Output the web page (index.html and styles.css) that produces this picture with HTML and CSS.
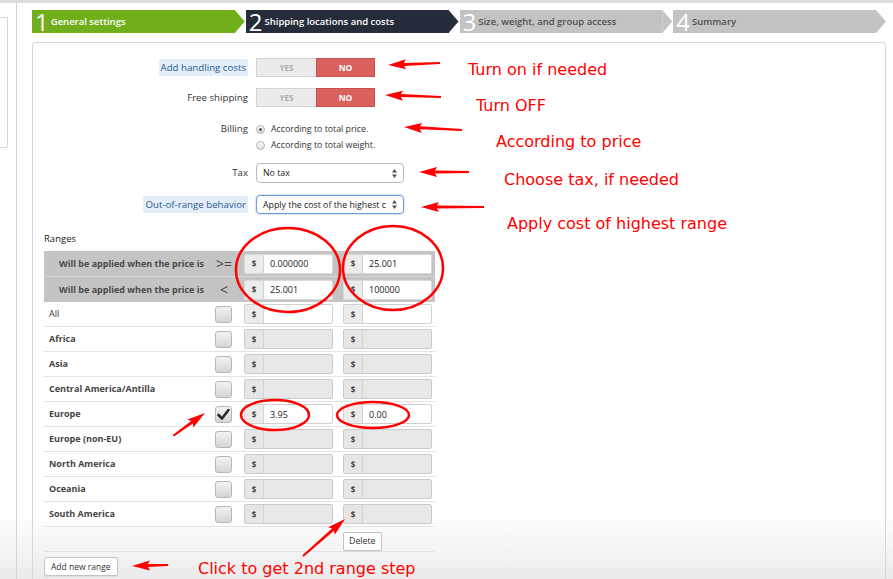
FILE: index.html
```html
<!DOCTYPE html>
<html lang="en">
<head>
  <meta charset="UTF-8" />
  <title>Shipping locations and costs</title>
  <link rel="stylesheet" href="styles.css">
</head>
<body>
  <div class="topline"></div>

  <div class="page">
    <!-- left edge of the admin sidebar -->
    <div class="side">
      <div class="side-box"></div>
      <div class="side-rail"></div>
    </div>

    <div class="main">
      <!-- WIZARD STEPS -->
      <div class="steps">
        <div class="step done">
          <div class="step-body"><span class="step-num">1</span><span class="step-text">General settings</span></div>
          <div class="step-arrow"></div>
        </div>
        <div class="step current">
          <div class="step-body"><span class="step-num">2</span><span class="step-text">Shipping locations and costs</span></div>
          <div class="step-arrow"></div>
        </div>
        <div class="step">
          <div class="step-body"><span class="step-num">3</span><span class="step-text">Size, weight, and group access</span></div>
          <div class="step-arrow"></div>
        </div>
        <div class="step">
          <div class="step-body"><span class="step-num">4</span><span class="step-text">Summary</span></div>
          <div class="step-arrow"></div>
        </div>
      </div>

      <div class="panel">
        <div class="field first">
          <label class="field-label"><span class="hint">Add handling costs</span></label>
          <div class="toggle"><span class="toggle-yes">YES</span><span class="toggle-no">NO</span></div>
        </div>

        <div class="field second">
          <label class="field-label">Free shipping</label>
          <div class="toggle"><span class="toggle-yes">YES</span><span class="toggle-no">NO</span></div>
        </div>

        <div class="field billing">
          <label class="field-label">Billing</label>
          <div class="options">
            <div class="option"><span class="radio checked"></span>According to total price.</div>
            <div class="option"><span class="radio"></span>According to total weight.</div>
          </div>
        </div>

        <div class="field tax">
          <label class="field-label">Tax</label>
          <div class="select">
            <span class="select-text">No tax</span>
            <svg class="caret" width="5" height="9" viewBox="0 0 5 9"><path d="M2.5 0 L5 3.4 L0 3.4 Z M0 5.6 L5 5.6 L2.5 9 Z"/></svg>
          </div>
        </div>

        <div class="field range-mode">
          <label class="field-label"><span class="hint">Out-of-range behavior</span></label>
          <div class="select focus">
            <span class="select-text">Apply the cost of the highest c</span>
            <svg class="caret" width="5" height="9" viewBox="0 0 5 9"><path d="M2.5 0 L5 3.4 L0 3.4 Z M0 5.6 L5 5.6 L2.5 9 Z"/></svg>
          </div>
        </div>

        <div class="ranges-title">Ranges</div>

        <div class="ranges">
          <div class="range-head">
            <div class="head-text">Will be applied when the price is</div>
            <div class="head-op">&gt;=</div>
            <div class="money"><span class="money-cur">$</span><input type="text" value="0.000000"></div>
            <div class="money"><span class="money-cur">$</span><input type="text" value="25.001"></div>
          </div>
          <div class="range-head second">
            <div class="head-text">Will be applied when the price is</div>
            <div class="head-op">&lt;</div>
            <div class="money"><span class="money-cur">$</span><input type="text" value="25.001"></div>
            <div class="money"><span class="money-cur">$</span><input type="text" value="100000"></div>
          </div>

          <div class="range-row">
            <div class="zone plain">All</div>
            <span class="check"></span>
            <div class="money"><span class="money-cur">$</span><input type="text" value=""></div>
            <div class="money"><span class="money-cur">$</span><input type="text" value=""></div>
          </div>
          <div class="range-row">
            <div class="zone">Africa</div>
            <span class="check"></span>
            <div class="money off"><span class="money-cur">$</span><input type="text" disabled></div>
            <div class="money off"><span class="money-cur">$</span><input type="text" disabled></div>
          </div>
          <div class="range-row">
            <div class="zone">Asia</div>
            <span class="check"></span>
            <div class="money off"><span class="money-cur">$</span><input type="text" disabled></div>
            <div class="money off"><span class="money-cur">$</span><input type="text" disabled></div>
          </div>
          <div class="range-row">
            <div class="zone">Central America/Antilla</div>
            <span class="check"></span>
            <div class="money off"><span class="money-cur">$</span><input type="text" disabled></div>
            <div class="money off"><span class="money-cur">$</span><input type="text" disabled></div>
          </div>
          <div class="range-row">
            <div class="zone">Europe</div>
            <span class="check on"><svg width="15" height="15" viewBox="0 0 15 15"><path d="M2.5 8 L6 11.5 L12.5 3"/></svg></span>
            <div class="money"><span class="money-cur">$</span><input type="text" value="3.95"></div>
            <div class="money"><span class="money-cur">$</span><input type="text" value="0.00"></div>
          </div>
          <div class="range-row">
            <div class="zone">Europe (non-EU)</div>
            <span class="check"></span>
            <div class="money off"><span class="money-cur">$</span><input type="text" disabled></div>
            <div class="money off"><span class="money-cur">$</span><input type="text" disabled></div>
          </div>
          <div class="range-row">
            <div class="zone">North America</div>
            <span class="check"></span>
            <div class="money off"><span class="money-cur">$</span><input type="text" disabled></div>
            <div class="money off"><span class="money-cur">$</span><input type="text" disabled></div>
          </div>
          <div class="range-row">
            <div class="zone">Oceania</div>
            <span class="check"></span>
            <div class="money off"><span class="money-cur">$</span><input type="text" disabled></div>
            <div class="money off"><span class="money-cur">$</span><input type="text" disabled></div>
          </div>
          <div class="range-row">
            <div class="zone">South America</div>
            <span class="check"></span>
            <div class="money off"><span class="money-cur">$</span><input type="text" disabled></div>
            <div class="money off"><span class="money-cur">$</span><input type="text" disabled></div>
          </div>

          <div class="range-row foot">
            <div></div>
            <div></div>
            <div></div>
            <div><button class="btn">Delete</button></div>
          </div>
        </div>

        <button class="btn add-range">Add new range</button>
      </div>
    </div>
  </div>

  <!-- red annotations drawn over the screenshot -->
  <svg class="notes" width="893" height="579" viewBox="0 0 893 579">
    <g class="note-rings">
      <ellipse cx="288" cy="270" rx="52" ry="42"/>
      <ellipse cx="393" cy="268" rx="50" ry="42"/>
      <ellipse cx="275" cy="415" rx="34" ry="15"/>
      <ellipse cx="373" cy="415" rx="36" ry="13"/>
    </g>
    <g class="note-arrows">
      <path transform="translate(388 65) rotate(-2.2)" d="M0 0 L18 -5 L16 -1.5 L52 -1 L52 1 L16 1.5 L18 5 Z"/>
      <path transform="translate(385 95) rotate(2)" d="M0 0 L18 -5 L16 -1.5 L56 -1 L56 1 L16 1.5 L18 5 Z"/>
      <path transform="translate(404 127) rotate(3)" d="M0 0 L18 -5 L16 -1.5 L58 -1 L58 1 L16 1.5 L18 5 Z"/>
      <path transform="translate(419 172)" d="M0 0 L18 -5 L16 -1.5 L50 -1 L50 1 L16 1.5 L18 5 Z"/>
      <path transform="translate(421 207)" d="M0 0 L18 -5 L16 -1.5 L63 -1 L63 1 L16 1.5 L18 5 Z"/>
      <path transform="translate(132 566) rotate(-1.6)" d="M0 0 L18 -5 L16 -1.5 L36 -1 L36 1 L16 1.5 L18 5 Z"/>
      <path transform="translate(345 519) rotate(138.6)" d="M0 0 L18 -5 L16 -1.5 L56 -1 L56 1 L16 1.5 L18 5 Z"/>
      <path transform="translate(205 413) rotate(144.3)" d="M0 0 L18 -5 L16 -1.5 L39 -1 L39 1 L16 1.5 L18 5 Z"/>
    </g>
    <g class="note-text">
      <text x="468" y="75">Turn on if needed</text>
      <text x="476" y="111">Turn OFF</text>
      <text x="496" y="147">According to price</text>
      <text x="504" y="185">Choose tax, if needed</text>
      <text x="507" y="229">Apply cost of highest range</text>
      <text x="198" y="574">Click to get 2nd range step</text>
    </g>
  </svg>
</body>
</html>
```

FILE: styles.css
```css
html, body {
  height: 579px;
  overflow: hidden;
}

body {
  margin: 0;
  position: relative;
  font-family: "Open Sans", "Liberation Sans", sans-serif;
  color: #333;
  background: linear-gradient(to bottom, #fff 0, #fff 515px, #ebebeb 579px);
}

.topline {
  height: 3px;
  background: #dcdcdc;
}

.page {
  display: flex;
  height: 576px;
}

/* SIDEBAR EDGE */
.side {
  width: 32px;
  flex: none;
  display: flex;
}

.side-box {
  width: 8px;
  height: 131px;
  margin-top: 14px;
  box-sizing: border-box;
  border: 1px solid #d6d6d6;
  border-left: none;
  border-radius: 0 0 3px 0;
}

.side-rail {
  width: 1px;
  margin-left: 8px;
  background: #d4d4d4;
}

.main {
  width: 854px;
  flex: none;
}

/* WIZARD STEPS */
.steps {
  display: flex;
  gap: 1px;
  height: 23px;
  margin-top: 7px;
}

.step {
  flex: 1;
  display: flex;
}

.step-body {
  flex: 1;
  display: flex;
  align-items: center;
  padding-left: 3px;
  white-space: nowrap;
  background: #c3c3c3;
  color: #505050;
}

.step-arrow {
  width: 10px;
  background: #c3c3c3;
  clip-path: polygon(0 0, 100% 50%, 0 100%);
}

.step.done .step-body,
.step.done .step-arrow {
  background: #70af1b;
}

.step.current .step-body,
.step.current .step-arrow {
  background: #272c3a;
}

.step.done .step-body,
.step.current .step-body {
  color: #fff;
}

.step-num {
  font-size: 24px;
  font-weight: 400;
  line-height: 20px;
  color: #fff;
  margin-right: 2px;
}

.step-text {
  font-size: 9.5px;
  font-weight: 600;
}

/* PANEL */
.panel {
  margin-top: 9px;
  height: 600px;
  box-sizing: border-box;
  padding-left: 11px;
  border: 1px solid #d8d8d8;
  border-bottom: none;
  border-radius: 4px 4px 0 0;
}

.field {
  display: flex;
  align-items: center;
}

.field.first { margin-top: 15px; }
.field.second { margin-top: 11px; }
.field.billing { margin-top: 14px; align-items: flex-start; }
.field.tax { margin-top: 10px; }
.field.range-mode { margin-top: 12px; }

.field-label {
  width: 204px;
  flex: none;
  margin-right: 8px;
  text-align: right;
  font-size: 9.7px;
  line-height: 16px;
  color: #333;
}

.hint {
  background: #e3eef9;
  color: #2d5a8e;
  padding: 2px 2px;
  border-radius: 2px;
}

.toggle {
  display: flex;
  width: 119px;
  height: 19px;
  font-weight: 700;
}

.toggle span {
  display: flex;
  align-items: center;
  justify-content: center;
  box-sizing: border-box;
}

.toggle-yes {
  width: 60px;
  background: #ebebeb;
  border: 1px solid #d4d4d4;
  border-right: none;
  color: #adadad;
  font-size: 8px;
}

.toggle-no {
  flex: 1;
  background: #d9625f;
  border: 1px solid #c45150;
  color: #fff;
  font-size: 8.5px;
}

.option {
  display: flex;
  align-items: center;
  height: 16px;
  font-size: 8.8px;
  color: #333;
}

.radio {
  width: 9px;
  height: 9px;
  box-sizing: border-box;
  margin-right: 6px;
  border: 1px solid #b0b0b0;
  border-radius: 50%;
  background: linear-gradient(#fdfdfd, #dedede);
  display: flex;
  align-items: center;
  justify-content: center;
}

.radio.checked::after {
  content: "";
  width: 3px;
  height: 3px;
  border-radius: 50%;
  background: #555;
}

.select {
  width: 148px;
  height: 20px;
  box-sizing: border-box;
  display: flex;
  align-items: center;
  justify-content: space-between;
  padding: 0 6px;
  border: 1px solid #b9b9b9;
  border-radius: 4px;
  background: #fff;
  font-size: 8.8px;
  color: #222;
}

.select.focus {
  height: 19px;
  border-color: #6a9fe0;
  box-shadow: 0 0 0 1px rgba(110, 160, 225, 0.25);
}

.select-text {
  white-space: nowrap;
}

.caret {
  fill: #555;
}

/* RANGES */
.ranges-title {
  margin-top: 18px;
  font-size: 9.5px;
  line-height: 14px;
  color: #222;
}

.ranges {
  width: 391px;
  margin-top: 5px;
}

.range-head,
.range-row {
  display: grid;
  align-items: center;
}

.range-head {
  grid-template-columns: 160px 40px 99px 92px;
  height: 25px;
  background: #c4c4c4;
}

.range-head.second {
  height: 26px;
  border-top: 1px solid #d6d6d6;
  box-sizing: border-box;
}

.head-text {
  text-align: right;
  font-size: 9px;
  font-weight: 700;
  color: #4a4a4a;
}

.head-op {
  text-align: center;
  font-size: 14px;
  color: #4a4a4a;
}

.range-row {
  grid-template-columns: 171px 29px 99px 92px;
  height: 25px;
  box-sizing: border-box;
  border-bottom: 1px solid #e3e3e3;
}

.zone {
  padding-left: 5px;
  padding-bottom: 2px;
  font-size: 9px;
  font-weight: 700;
  color: #444;
}

.zone.plain {
  font-weight: 400;
  color: #333;
}

.check {
  width: 17px;
  height: 17px;
  box-sizing: border-box;
  border: 1px solid #b7b7b7;
  border-radius: 3px;
  background: linear-gradient(#f3f3f3, #d5d5d5);
  display: flex;
  align-items: center;
  justify-content: center;
}

.check svg path {
  fill: none;
  stroke: #2b2b2b;
  stroke-width: 2.6;
  stroke-linecap: round;
  stroke-linejoin: round;
}

.money {
  display: flex;
  width: 89px;
  height: 20px;
  box-sizing: border-box;
  border: 1px solid #d0d0d0;
  border-radius: 2px;
  background: #fff;
  overflow: hidden;
}

.range-head .money {
  border-color: #d9d9d9;
}

.money-cur {
  width: 18px;
  flex: none;
  display: flex;
  align-items: center;
  justify-content: center;
  background: #ececec;
  border-right: 1px solid #d3d3d3;
  font-size: 8px;
  font-weight: 700;
  color: #444;
}

.money input {
  flex: 1;
  min-width: 0;
  border: none;
  outline: none;
  background: transparent;
  padding: 0 6px;
  font-family: "Open Sans", "Liberation Sans", sans-serif;
  font-size: 9px;
  color: #222;
}

.money.off {
  background: #e8e8e8;
  border-color: #cbcbcb;
}

.money.off .money-cur {
  background: #e6e6e6;
}

.btn {
  height: 19px;
  padding: 0 5px;
  font-family: "Open Sans", "Liberation Sans", sans-serif;
  font-size: 8.8px;
  color: #333;
  background: #fff;
  border: 1px solid #c4c4c4;
  border-radius: 2px;
  box-shadow: 0 1px 0 #dcdcdc;
}

.range-row.foot .btn {
  margin-bottom: 3px;
}

.add-range {
  display: block;
  margin-top: 5px;
  padding: 0 6px;
  font-size: 8.5px;
}

/* ANNOTATIONS */
.notes {
  position: absolute;
  top: 0;
  left: 0;
  pointer-events: none;
}

.note-rings {
  fill: none;
  stroke: #f00;
  stroke-width: 2.5;
}

.note-arrows {
  fill: #f00;
}

.note-text {
  fill: #f00;
  font-family: "DejaVu Sans", sans-serif;
  font-size: 16px;
}
```
